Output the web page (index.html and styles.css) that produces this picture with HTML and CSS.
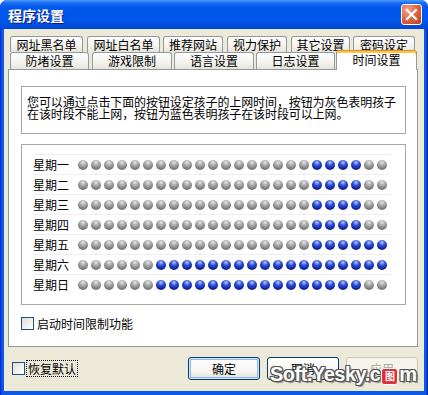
FILE: index.html
```html
<!DOCTYPE html>
<html lang="zh-CN">
<head>
    <meta charset="UTF-8">
    <title>程序设置</title>
    <link rel="stylesheet" href="styles.css">
</head>
<body>
    <div class="window">
        <div class="titlebar">
            <span class="title">程序设置</span>
            <span class="close">
                <svg width="21" height="21" viewBox="0 0 21 21"><path d="M6 6 L15 15 M15 6 L6 15" stroke="#fff" stroke-width="2.2" stroke-linecap="square"/></svg>
            </span>
        </div>
        <div class="client">
            <div class="tabs">
                <div class="tab-row row1">
                    <div class="tab">网址黑名单</div>
                    <div class="tab">网址白名单</div>
                    <div class="tab">推荐网站</div>
                    <div class="tab">视力保护</div>
                    <div class="tab">其它设置</div>
                    <div class="tab">密码设定</div>
                </div>
                <div class="tab-row row2">
                    <div class="tab">防堵设置</div>
                    <div class="tab">游戏限制</div>
                    <div class="tab">语言设置</div>
                    <div class="tab">日志设置</div>
                    <div class="tab active">时间设置</div>
                </div>
            </div>
            <div class="panel">
                <div class="desc">您可以通过点击下面的按钮设定孩子的上网时间，按钮为灰色表明孩子在该时段不能上网，按钮为蓝色表明孩子在该时段可以上网。</div>
                <div class="grid" id="grid"></div>
                <div class="check-row">
                    <span class="box"></span>
                    <span>启动时间限制功能</span>
                </div>
            </div>
            <div class="footer">
                <div class="check-row reset">
                    <span class="box"></span>
                    <span class="focus">恢复默认</span>
                </div>
                <div class="buttons">
                    <button class="btn default">确定</button>
                    <button class="btn">取消</button>
                    <button class="btn disabled">应用</button>
                </div>
            </div>
        </div>
        <div class="watermark">Soft.Yesky.c<span class="wm-o">图</span>m</div>
    </div>

    <script>
        const days = [
            ['星期一', 18, 21],
            ['星期二', 18, 21],
            ['星期三', 18, 21],
            ['星期四', 18, 21],
            ['星期五', 18, 23],
            ['星期六', 6, 23],
            ['星期日', 6, 21]
        ];
        const grid = document.getElementById('grid');

        days.forEach(([name, from, to]) => {
            const row = document.createElement('div');
            row.className = 'row';
            let html = `<span class="day">${name}</span>`;
            for (let h = 0; h < 24; h++) {
                html += `<span class="dot ${h >= from && h <= to ? 'on' : ''}"></span>`;
            }
            row.innerHTML = html;
            grid.appendChild(row);
        });
    </script>
</body>
</html>
```

FILE: styles.css
```css
body {
    margin: 0;
    font-family: "Noto Sans CJK SC", "Liberation Sans", sans-serif;
    font-size: 12px;
    color: #000;
    background: #fff;
}

.window {
    position: relative;
    width: 428px;
    height: 395px;
    box-sizing: border-box;
    display: flex;
    flex-direction: column;
    background: linear-gradient(90deg, #0019cf, #0a5ae8 2px, #0a5ae8 426px, #00138c);
    border-radius: 7px 7px 0 0;
    overflow: hidden;
}

.titlebar {
    height: 29px;
    display: flex;
    align-items: center;
    padding: 0 6px 0 8px;
    background: linear-gradient(#4a9cff 0, #1c6cf2 3px, #0058ee 7px, #0056e8 20px, #0049d6 29px);
}

.title {
    flex: 1;
    color: #fff;
    font-weight: bold;
    font-size: 14px;
    text-shadow: 1px 1px #0a1c8c;
}

.close {
    width: 21px;
    height: 21px;
    box-sizing: border-box;
    border: 1px solid #fff;
    border-radius: 3px;
    background: radial-gradient(circle at 30% 25%, #f3a48a, #dd6b48 45%, #c2391a);
    display: flex;
    align-items: center;
    justify-content: center;
}

.close svg {
    display: block;
    margin: -1px;
}

.client {
    flex: 1;
    margin: 0 4px 4px 4px;
    padding: 7px 0 0 4px;
    background: #ece9d8;
    display: flex;
    flex-direction: column;
}

.tabs {
    margin-left: 2px;
}

.tab-row {
    display: flex;
}

.tab {
    box-sizing: border-box;
    height: 16px;
    border: 1px solid #919b9c;
    border-bottom: none;
    border-radius: 3px 3px 0 0;
    background: linear-gradient(#ffffff, #f3f2ed 60%, #e6e4da);
    display: flex;
    align-items: center;
    justify-content: center;
    white-space: nowrap;
    line-height: 14px;
}

.row1 .tab:nth-child(1) { width: 73px; margin-right: 4px; }
.row1 .tab:nth-child(2) { width: 73px; margin-right: 3px; }
.row1 .tab:nth-child(3) { width: 60px; margin-right: 4px; }
.row1 .tab:nth-child(4) { width: 60px; margin-right: 4px; }
.row1 .tab:nth-child(5) { width: 59px; margin-right: 3px; }
.row1 .tab:nth-child(6) { width: 62px; }

.row2 .tab {
    height: 17px;
}

.row2 .tab:nth-child(1) { width: 79px; margin-right: 3px; }
.row2 .tab:nth-child(2) { width: 80px; margin-right: 2px; }
.row2 .tab:nth-child(3) { width: 80px; margin-right: 2px; }
.row2 .tab:nth-child(4) { width: 79px; margin-right: 1px; }

.row2 .tab.active {
    position: relative;
    z-index: 2;
    width: 81px;
    height: 20px;
    margin-top: -2px;
    margin-bottom: -1px;
    background: #fff;
    border-top: 1px solid #e68b2c;
    box-shadow: inset 0 2px #ffc83c;
    padding-bottom: 2px;
}

.panel {
    box-sizing: border-box;
    width: 410px;
    height: 278px;
    border: 1px solid #919b9c;
    background: #fff;
    padding: 16px 0 0 12px;
}

.desc {
    box-sizing: border-box;
    width: 385px;
    height: 48px;
    border: 1px solid #a7a7a7;
    padding: 9px 5px 0 5px;
    line-height: 12px;
    letter-spacing: -0.1px;
}

.grid {
    box-sizing: border-box;
    width: 385px;
    height: 161px;
    margin-top: 10px;
    border: 1px solid #a7a7a7;
    padding: 9px 0 0 11px;
}

.row {
    display: flex;
    align-items: center;
    box-sizing: border-box;
    width: 358px;
    height: 20px;
    border-top: 1px solid #efefef;
}

.day {
    width: 45px;
    line-height: 12px;
}

.dot {
    width: 10px;
    height: 10px;
    margin-right: 3px;
    border-radius: 50%;
    background: radial-gradient(circle at 50% 25%, #e8e8e8 0, #a8a8a8 35%, #7a7a7a 70%, #5c5c5c);
}

.dot.on {
    background: radial-gradient(circle at 50% 25%, #b8c8ff 0, #2f50d8 35%, #10229e 70%, #08106a);
}

.check-row {
    display: flex;
    align-items: center;
    margin-top: 12px;
    line-height: 13px;
}

.box {
    width: 13px;
    height: 13px;
    box-sizing: border-box;
    border: 1px solid #1c5180;
    background: linear-gradient(135deg, #dcdcd7, #f6f6f4 70%, #fff);
    margin-right: 3px;
}

.footer {
    flex: 1;
    display: flex;
    align-items: center;
    justify-content: space-between;
    padding: 0 6px 1px 4px;
}

.reset {
    margin-top: 0;
}

.focus {
    outline: 1px dotted #000;
    outline-offset: 1px;
}

.buttons {
    display: flex;
    gap: 7px;
}

.btn {
    width: 72px;
    height: 23px;
    box-sizing: border-box;
    border: 1px solid #003c74;
    border-radius: 3px;
    background: linear-gradient(#ffffff, #f5f4ef 70%, #dcd8cc);
    font-family: "Noto Sans CJK SC", sans-serif;
    font-size: 12px;
    color: #000;
    padding: 0;
}

.btn.default {
    box-shadow: inset 0 0 0 1px #cee7ff, inset 0 0 0 2px #98b8ea;
}

.btn.disabled {
    border-color: #c9c7ba;
    background: #f5f4ea;
    color: #aca899;
}

.watermark {
    position: absolute;
    left: 270px;
    top: 363px;
    font-family: "Liberation Sans", sans-serif;
    font-weight: bold;
    font-size: 20px;
    letter-spacing: -0.5px;
    color: #fff;
    text-shadow: -1px -1px 0 #555, 1px -1px 0 #555, -1px 1px 0 #555, 1px 1px 0 #555, 0 -1px 0 #555, 0 1px 0 #555, -1px 0 0 #555, 1px 0 0 #555, 2px 2px 1px #8a8a8a;
    display: flex;
    align-items: center;
}

.wm-o {
    display: inline-flex;
    align-items: center;
    justify-content: center;
    width: 15px;
    height: 15px;
    margin: 3px 1px 0;
    background: #e0303a;
    border: 1px solid #fff;
    border-radius: 3px;
    font-family: "Noto Sans CJK SC", sans-serif;
    font-size: 10px;
    line-height: 10px;
    text-shadow: none;
}
```
